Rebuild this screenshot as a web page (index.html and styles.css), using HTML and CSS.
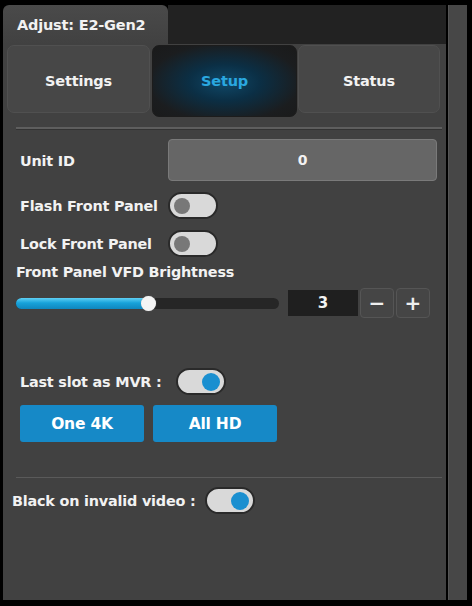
FILE: index.html
```html
<!DOCTYPE html>
<html lang="en">
<head>
  <meta charset="UTF-8">
  <meta name="viewport" content="width=device-width, initial-scale=1.0">
  <title>Adjust: E2-Gen2</title>
  <link rel="stylesheet" href="styles.css">
</head>
<body>

  <div class="frame">
    <div class="main">
      <div class="head">
        <div class="head-tab">Adjust: E2-Gen2</div>
        <div class="head-rest"></div>
      </div>

      <div class="panel">
        <div class="tabs">
          <div class="tab tab-settings">Settings</div>
          <div class="tab tab-setup active">Setup</div>
          <div class="tab tab-status">Status</div>
        </div>

        <div class="rule rule-top"></div>

        <div class="row row-unit">
          <label class="lbl">Unit ID</label>
          <div class="unit-box">0</div>
        </div>

        <div class="row row-flash">
          <label class="lbl">Flash Front Panel</label>
          <span class="toggle"><span class="knob"></span></span>
        </div>

        <div class="row row-lock">
          <label class="lbl">Lock Front Panel</label>
          <span class="toggle"><span class="knob"></span></span>
        </div>

        <div class="bright-title">Front Panel VFD Brightness</div>

        <div class="bright-row">
          <div class="slider">
            <div class="slider-fill" style="width: 50%"></div>
            <div class="slider-thumb" style="left: 50%"></div>
          </div>
          <div class="num-box">3</div>
          <button class="step">&minus;</button>
          <button class="step">+</button>
        </div>

        <div class="row row-mvr">
          <label class="lbl">Last slot as MVR :</label>
          <span class="toggle on"><span class="knob"></span></span>
        </div>

        <div class="mvr-buttons">
          <button class="blue-btn">One 4K</button>
          <button class="blue-btn">All HD</button>
        </div>

        <div class="rule rule-bottom"></div>

        <div class="row row-black">
          <label class="lbl">Black on invalid video :</label>
          <span class="toggle on"><span class="knob"></span></span>
        </div>
      </div>
    </div>

    <div class="side-strip"></div>
  </div>

</body>
</html>
```

FILE: styles.css
```css
html, body {
  margin: 0;
  padding: 0;
  background: #000;
}

body {
  font-family: "DejaVu Sans", Verdana, sans-serif;
  font-weight: bold;
  color: #f2f2f2;
  width: 472px;
  height: 606px;
  overflow: hidden;
}

.frame {
  display: flex;
  gap: 2px;
  padding: 5px 5px 6px 3px;
  height: 595px;
}

.main {
  width: 443px;
  display: flex;
  flex-direction: column;
}

.side-strip {
  width: 19px;
  background: #474747;
  border-left: 1px solid #555;
  box-sizing: border-box;
}

/* header with the window tab */
.head {
  display: flex;
  height: 39px;
}

.head-tab {
  width: 165px;
  background: linear-gradient(#4a4a4a, #414141);
  border-radius: 6px 6px 0 0;
  font-size: 14.5px;
  padding-left: 14px;
  box-sizing: border-box;
  line-height: 40px;
  letter-spacing: -0.2px;
}

.head-rest {
  flex: 1;
  background: #222;
}

.panel {
  flex: 1;
  background: #414141;
  padding: 1px 6px 0 0;
}

/* Settings / Setup / Status */
.tabs {
  display: flex;
  align-items: flex-start;
  height: 72px;
  padding-left: 4px;
}

.tab {
  height: 68px;
  box-sizing: border-box;
  background: #474747;
  border: 1px solid #505050;
  border-radius: 7px;
  display: flex;
  align-items: center;
  justify-content: center;
  padding-top: 3px;
  font-size: 14.5px;
  letter-spacing: -0.2px;
}

.tab-settings {
  width: 143px;
}

.tab-setup {
  width: 145px;
  margin-left: 2px;
  height: 72px;
  padding-top: 0;
}

.tab-status {
  width: 142px;
  margin-left: 1px;
}

.tab.active {
  background: radial-gradient(ellipse at 50% 52%, #0f4868 0%, #0b2f45 35%, #1b1d1f 75%, #1a1a1a 100%);
  border-color: #1c1c1c;
  color: #2aa8e0;
}

.rule {
  height: 2px;
  margin-left: 13px;
  margin-right: -2px;
  background: #5e5e5e;
  border-bottom: 1px solid #333;
}

.rule-top {
  margin-top: 10px;
}

.rule-bottom {
  margin-top: 35px;
  height: 1px;
  background: #5a5a5a;
  border-bottom: none;
}

/* label + control rows */
.row {
  display: flex;
  align-items: center;
  padding-left: 17px;
}

.lbl {
  font-size: 14.4px;
  letter-spacing: -0.2px;
}

.row-unit .lbl,
.row-flash .lbl,
.row-lock .lbl {
  width: 148px;
  flex: none;
}

.row-unit {
  margin-top: 9px;
}

.row-unit .lbl {
  padding-top: 2px;
}

.unit-box {
  width: 269px;
  height: 42px;
  box-sizing: border-box;
  background: #666;
  border: 1px solid #7a7a7a;
  border-radius: 4px;
  display: flex;
  align-items: center;
  justify-content: center;
  font-size: 14px;
}

.row-flash {
  margin-top: 11px;
}

.row-lock {
  margin-top: 11px;
}

.toggle {
  position: relative;
  width: 50px;
  height: 27px;
  box-sizing: border-box;
  border: 2px solid #2a2a2a;
  border-radius: 14px;
  background: #d9d9d9;
  flex: none;
}

.toggle .knob {
  position: absolute;
  top: 4px;
  left: 4px;
  width: 16px;
  height: 16px;
  border-radius: 50%;
  background: #787878;
}

.toggle.on .knob {
  left: auto;
  right: 4px;
  width: 18px;
  height: 18px;
  top: 3px;
  background: #1a8fd0;
}

/* brightness */
.bright-title {
  font-size: 14.4px;
  letter-spacing: -0.2px;
  padding-left: 13px;
  margin-top: 7px;
}

.bright-row {
  display: flex;
  align-items: center;
  padding-left: 13px;
  margin-top: 8px;
}

.slider {
  position: relative;
  width: 263px;
  height: 11px;
  border-radius: 6px;
  background: #262626;
}

.slider-fill {
  height: 100%;
  border-radius: 6px 0 0 6px;
  background: linear-gradient(#5fd0f4, #17a2da 45%, #0f86be);
}

.slider-thumb {
  position: absolute;
  top: -2px;
  width: 15px;
  height: 15px;
  margin-left: -7px;
  border-radius: 50%;
  background: #f4f4f4;
  box-shadow: 0 0 1px #999;
}

.num-box {
  width: 70px;
  height: 26px;
  margin-left: 9px;
  background: #1f1f1f;
  display: flex;
  align-items: center;
  justify-content: center;
  font-size: 15px;
}

.step {
  width: 34px;
  height: 30px;
  margin-left: 2px;
  padding: 0;
  background: #454545;
  border: 1px solid #555;
  border-radius: 4px;
  color: #eee;
  font-family: "DejaVu Sans", sans-serif;
  font-weight: bold;
  font-size: 20px;
  line-height: 26px;
}

.step + .step {
  margin-left: 2px;
}

/* multiviewer */
.row-mvr {
  margin-top: 50px;
}

.row-mvr .lbl {
  width: 156px;
  flex: none;
}

.mvr-buttons {
  display: flex;
  gap: 9px;
  padding-left: 17px;
  margin-top: 10px;
}

.blue-btn {
  width: 124px;
  height: 37px;
  border: none;
  border-radius: 3px;
  background: #1689c7;
  color: #fff;
  font-family: "DejaVu Sans", sans-serif;
  font-weight: bold;
  font-size: 15.5px;
  letter-spacing: -0.2px;
}

.row-black {
  padding-left: 9px;
  margin-top: 9px;
}

.row-black .lbl {
  width: 193px;
  flex: none;
}
```
